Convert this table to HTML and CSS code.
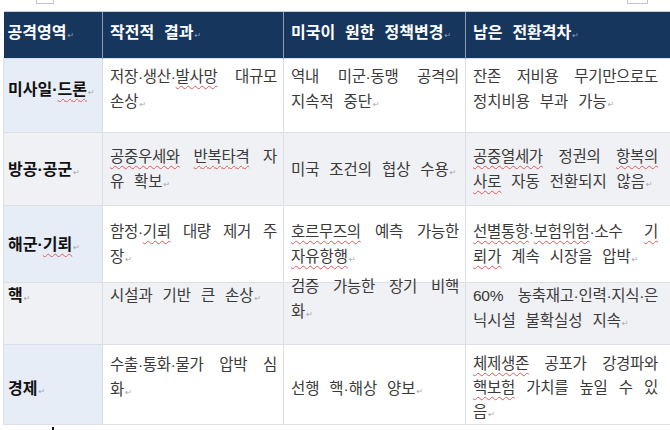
FILE: index.html
```html
<!DOCTYPE html>
<html lang="ko">
<head>
<meta charset="utf-8">
<title>공격영역</title>
<link rel="stylesheet" href="styles.css">
</head>
<body>
<div class="marks"><span class="mark mark-l"></span><span class="mark mark-r"></span></div>
<table class="grid">
  <colgroup>
    <col class="c1"><col class="c2"><col class="c3"><col class="c4">
  </colgroup>
  <tr class="head">
    <th class="k">공격영역<span class="pm">↵</span></th>
    <th>작전적 결과<span class="pm">↵</span></th>
    <th>미국이 원한 정책변경<span class="pm">↵</span></th>
    <th class="last">남은 전환격차<span class="pm">↵</span></th>
  </tr>
  <tr class="r1">
    <td class="k">미사일·<u class="sp">드론</u><span class="pm">↵</span></td>
    <td><span class="ln">저장·생산·<u class="sp">발사망</u> 대규모</span>손상<span class="pm">↵</span></td>
    <td><span class="ln">역내 미군·동맹 공격의</span>지속적 중단<span class="pm">↵</span></td>
    <td class="last"><span class="ln">잔존 저비용 무기만으로도</span>정치비용 부과 가능<span class="pm">↵</span></td>
  </tr>
  <tr class="r2 alt">
    <td class="k">방공·공군<span class="pm">↵</span></td>
    <td><span class="ln"><u class="sp">공중우세와</u> <u class="sp">반복타격</u> 자</span>유 확보<span class="pm">↵</span></td>
    <td>미국 조건의 협상 수용<span class="pm">↵</span></td>
    <td class="last"><span class="ln"><u class="sp">공중열세가</u> 정권의 <u class="sp">항복의</u></span><u class="sp">사로</u> 자동 전환되지 않음<span class="pm">↵</span></td>
  </tr>
  <tr class="r3">
    <td class="k">해군·<u class="sp">기뢰</u><span class="pm">↵</span></td>
    <td><span class="ln">함정·<u class="sp">기뢰</u> 대량 제거 주</span>장<span class="pm">↵</span></td>
    <td><span class="ln"><u class="sp">호르무즈의</u> 예측 가능한</span><u class="sp">자유항행</u><span class="pm">↵</span></td>
    <td class="last"><span class="ln"><u class="sp">선별통항</u>·<u class="sp">보험위험</u>·소수 <u class="sp">기</u></span><u class="sp">뢰가</u> 계속 시장을 압박<span class="pm">↵</span></td>
  </tr>
  <tr class="r4 alt">
    <td class="k">핵<span class="pm">↵</span></td>
    <td>시설과 기반 큰 손상<span class="pm">↵</span></td>
    <td><div class="lift"><span class="ln">검증 가능한 장기 비핵</span>화<span class="pm">↵</span></div></td>
    <td class="last"><span class="ln">60% 농축재고·인력·지식·은</span>닉시설 불확실성 지속<span class="pm">↵</span></td>
  </tr>
  <tr class="r5">
    <td class="k mid">경제<span class="pm">↵</span></td>
    <td><span class="ln">수출·통화·물가 압박 심</span>화<span class="pm">↵</span></td>
    <td class="mid">선행 핵·해상 양보<span class="pm">↵</span></td>
    <td class="last tight"><span class="ln"><u class="sp">체제생존</u> 공포가 강경파와</span><span class="ln"><u class="sp">핵보험</u> 가치를 높일 수 있</span>음<span class="pm">↵</span></td>
  </tr>
</table>
<div class="caret"></div>
</body>
</html>
```

FILE: styles.css
```css
html, body {
  margin: 0;
  padding: 0;
  background: #ffffff;
  overflow: hidden;
}

body {
  width: 670px;
  height: 430px;
  font-family: "Liberation Sans", "Noto Sans CJK KR", sans-serif;
  color: #3a3a3a;
}

.marks {
  height: 11px;
  display: flex;
  justify-content: space-between;
  align-items: flex-start;
  padding: 0 22px 0 36px;
}

.mark {
  display: block;
  height: 3px;
  border: 1px solid #c4c4c4;
  border-top: none;
}

.mark-l { width: 16px; }
.mark-r { width: 19px; }

.grid {
  margin-left: 3px;
  width: 668px;
  table-layout: fixed;
  border-collapse: collapse;
  font-size: 15.5px;
  line-height: 25px;
}

.c1 { width: 99px; }
.c2 { width: 181px; }
.c3 { width: 182px; }
.c4 { width: 206px; }

.grid th,
.grid td {
  padding: 0 6px 0 7px;
  text-align: left;
  word-spacing: 5.5px;
  word-break: break-all;
}

.grid td {
  border: 1px solid #dcdfe5;
  vertical-align: middle;
}

.head { height: 47px; }

.grid th {
  background: #17365d;
  color: #ffffff;
  font-size: 16px;
  font-weight: bold;
  vertical-align: middle;
  padding-bottom: 5px;
  border-left: 1px solid #8d9db5;
  border-top: 1px solid #c9ced6;
}

.grid th:first-child { border-left: none; }

.grid .k {
  padding-left: 4px;
  font-weight: bold;
  font-size: 16px;
  color: #111111;
}

.grid th.k { color: #ffffff; }

.grid td.k { background: #e7edf7; }

.grid .last { padding-right: 13px; }

.alt td,
.alt td.k { background: #f0f1f4; }

.ln {
  display: block;
  word-spacing: 0;
  letter-spacing: -0.3px;
  text-align: justify;
  text-align-last: justify;
}

.sp {
  text-decoration: underline wavy #df5a5a;
  text-decoration-thickness: 1px;
  text-underline-offset: 3px;
  text-decoration-skip-ink: none;
}

.pm {
  font-family: "DejaVu Sans", sans-serif;
  font-size: 8px;
  line-height: 0;
  font-weight: normal;
  color: #a7a7a7;
  margin-left: 1px;
  word-spacing: 0;
  letter-spacing: 0;
}

th .pm { color: #8d9db5; }

.r1 { height: 74px; }
.r1 td { padding-top: 5px; padding-bottom: 18px; }

.r2 { height: 73px; }
.r3 { height: 77px; }

.r4 { height: 62px; }
.r4 td { vertical-align: top; }

.lift { margin-top: -9px; }

.r5 { height: 79px; }
.r5 td { vertical-align: top; padding-top: 7px; }
.r5 td.mid { vertical-align: middle; }
.r5 td.tight { line-height: 24px; }

.caret {
  width: 2px;
  height: 6px;
  margin: 2px 0 0 52px;
  background: #111111;
}
```
